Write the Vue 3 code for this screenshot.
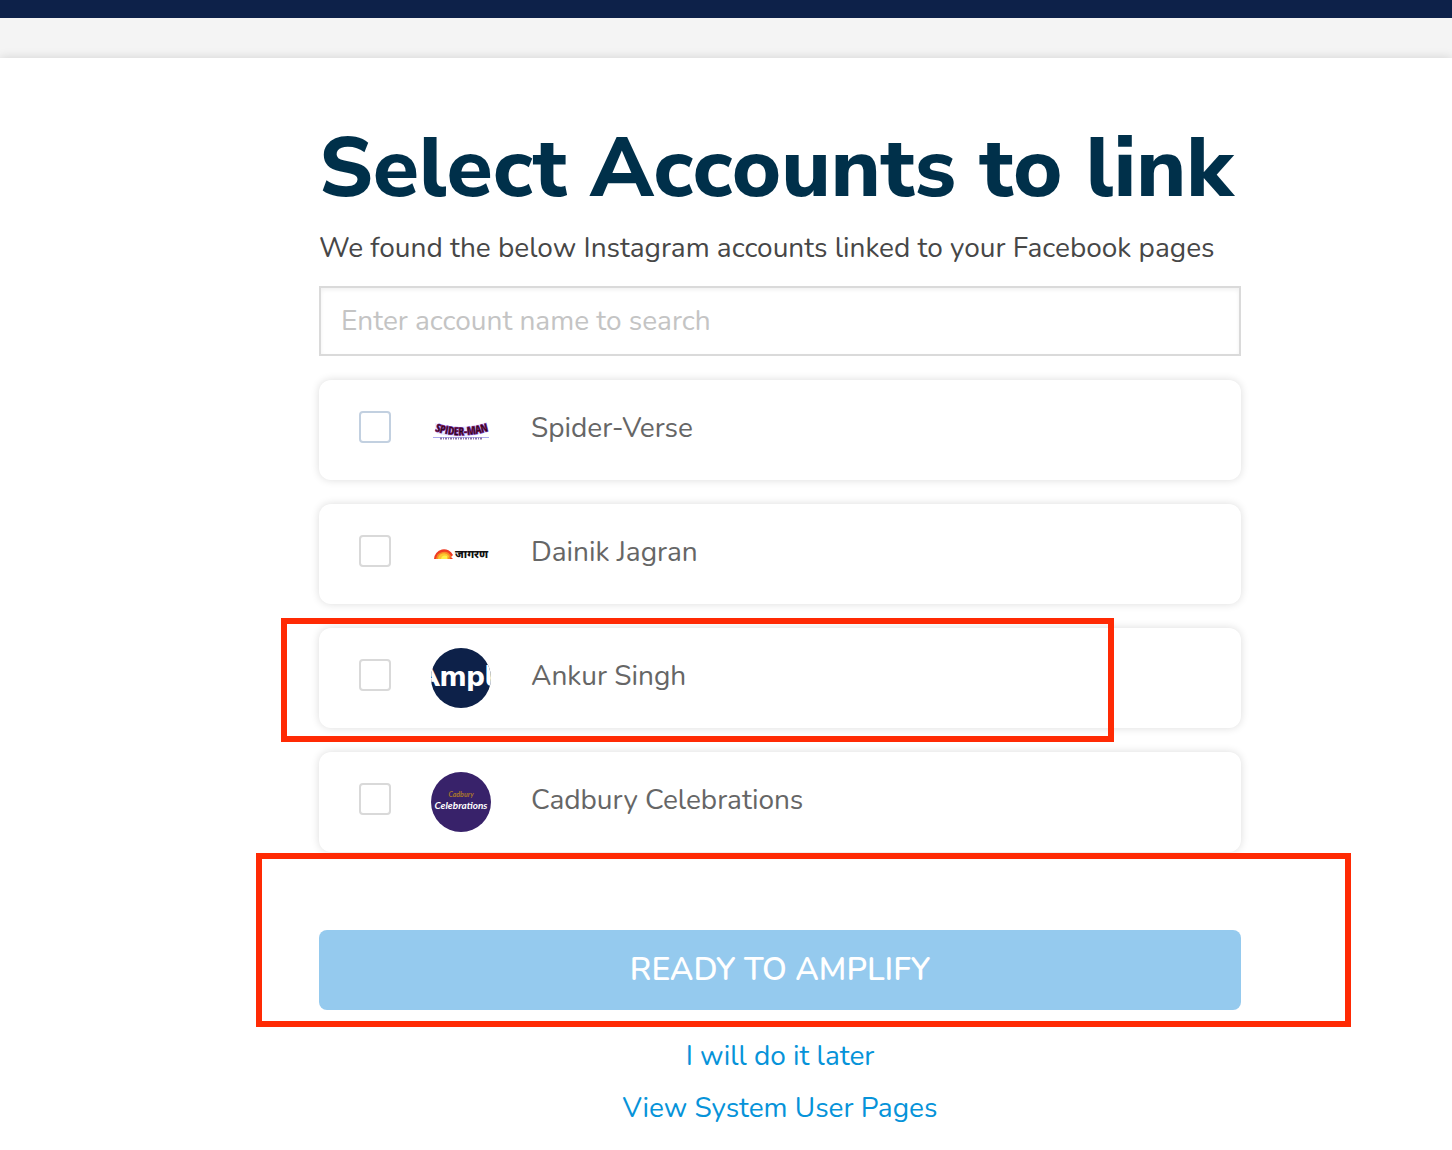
<script setup>
import { ref } from 'vue'

const search = ref('')
const selected = ref([])
const accounts = [
  { id: 'spider', name: 'Spider-Verse', focused: true },
  { id: 'jagran', name: 'Dainik Jagran' },
  { id: 'ampl', name: 'Ankur Singh', marked: true },
  { id: 'cadbury', name: 'Cadbury Celebrations' }
]
</script>

<template>
  <div class="page">
    <header class="topbar"></header>
    <main class="sheet">
      <form class="column" @submit.prevent>
        <h1>Select Accounts to link</h1>
        <p class="intro" id="intro">We found the below Instagram accounts linked to your Facebook pages</p>
        <input
          v-model="search"
          class="search"
          type="text"
          placeholder="Enter account name to search"
          aria-label="Enter account name to search"
        />
        <ul class="accounts" aria-labelledby="intro">
          <li v-for="account in accounts" :key="account.id" class="card">
            <label class="row">
              <input
                v-model="selected"
                type="checkbox"
                class="tick"
                :class="{ focused: account.focused }"
                :value="account.id"
              />
              <svg v-if="account.id === 'spider'" class="avatar" viewBox="0 0 60 60" aria-hidden="true">
                <path id="spider-arc" d="M4 31 Q30 40 61 30" fill="none" />
                <path d="M4 23 Q30 31 56 22 L57 32 Q30 41 5 33Z" fill="#8d86ea" opacity="0.2" />
                <text class="spider-glow"><textPath href="#spider-arc">SPIDER-MAN</textPath></text>
                <text class="spider-word"><textPath href="#spider-arc">SPIDER-MAN</textPath></text>
                <path d="M2 37.500H58" stroke="#aaa8ee" stroke-width="1" />
                <path d="M9 38.500H51" stroke="#8a74a8" stroke-width="2" stroke-dasharray="2 1 1 1" />
              </svg>
              <svg v-else-if="account.id === 'jagran'" class="avatar" viewBox="0 0 60 60" aria-hidden="true">
                <path d="M3 35A10 10 0 0 1 22 31L20 33L22 35Z" fill="#ef3b23" />
                <path d="M5 35A8 8 0 0 1 20 32L19 35Z" fill="#f78a25" />
                <path d="M7 35A6 6 0 0 1 18 32L17 35Z" fill="#fdc52f" />
                <path d="M10 35A4 4 0 0 1 16 32V35Z" fill="#fff04a" />
                <text class="jagran-word" x="24" y="34">जागरण</text>
              </svg>
              <svg v-else-if="account.id === 'ampl'" class="avatar round" viewBox="0 0 60 60" aria-hidden="true">
                <rect width="60" height="60" fill="#0d2149" />
                <text class="ampl-word" x="25" y="38">Ampl</text>
              </svg>
              <svg v-else class="avatar round" viewBox="0 0 60 60" aria-hidden="true">
                <rect width="60" height="60" fill="#38226a" />
                <text class="cadbury-small" x="30" y="25">Cadbury</text>
                <text class="cadbury-word" x="30" y="37">Celebrations</text>
              </svg>
              <span class="name">{{ account.name }}</span>
            </label>
            <span v-if="account.marked" class="marker marker-card"></span>
          </li>
        </ul>
        <div class="submit">
          <button type="submit">READY TO AMPLIFY</button>
          <span class="marker marker-submit"></span>
        </div>
        <nav class="links">
          <a href="#later">I will do it later</a>
          <a href="#pages">View System User Pages</a>
        </nav>
      </form>
    </main>
  </div>
</template>

<style>
body {
  background: #fff;
}
</style>

<style scoped>
.page {
  font-family: Nunito, "Open Sans", "Noto Sans", sans-serif;
  font-size: 28px;
  line-height: 40px;
  background: #f4f4f4;
}
.topbar {
  height: 18px;
  background: #0d2149;
}
.sheet {
  margin-top: 40px;
  padding: 62px 0 20px 108px;
  background: #fff;
  box-shadow: 0 0 10px rgba(0, 0, 0, 0.14);
}
.column {
  width: 100%;
  max-width: 922px;
  margin: 0 auto;
}
h1 {
  margin: 0;
  font-family: "Nunito Sans", "Noto Sans", sans-serif;
  font-size: 84px;
  font-weight: 800;
  line-height: 98px;
  white-space: nowrap;
  color: #00304a;
}
.intro {
  margin: 10px 0 18px;
  color: #474747;
  white-space: nowrap;
}
.search {
  display: block;
  box-sizing: border-box;
  width: 100%;
  height: 70px;
  padding: 0 20px;
  border: 2px solid #dadada;
  border-radius: 0;
  outline: none;
  background: #fff;
  box-shadow: inset 0 2px 4px rgba(0, 0, 0, 0.06);
  font: inherit;
  color: #474747;
}
.search::placeholder {
  color: #c4c4c4;
  opacity: 1;
}
.accounts {
  display: flex;
  flex-direction: column;
  gap: 24px;
  margin: 24px 0 78px;
  padding: 0;
  list-style: none;
}
.card {
  position: relative;
  border-radius: 12px;
  background: #fff;
  box-shadow: 0 0 8px rgba(0, 0, 0, 0.14);
}
.row {
  display: flex;
  align-items: center;
  gap: 40px;
  height: 100px;
  padding: 0 40px;
}
.tick {
  appearance: none;
  flex: none;
  box-sizing: border-box;
  width: 32px;
  height: 32px;
  margin: 0 0 6px;
  border: 2px solid #d9d9d9;
  border-radius: 4px;
  background: #fff;
}
.tick.focused {
  border-color: #c2d0e0;
}
.tick:checked {
  background: #95caee;
}
.avatar {
  flex: none;
  width: 60px;
  height: 60px;
}
.round {
  border-radius: 50%;
}
.name {
  margin-bottom: 4px;
  color: #666;
}
.spider-word,
.spider-glow {
  font: 700 11px "Liberation Sans Narrow", "Open Sans Condensed", "Roboto Condensed", "Liberation Sans", sans-serif;
  fill: #20081c;
  stroke: #b31538;
  stroke-width: 0.3px;
}
.spider-glow {
  stroke: #6a4ce0;
  stroke-width: 1px;
}
.jagran-word {
  font: 800 11px "Noto Sans", "Noto Sans Devanagari", sans-serif;
  fill: #111;
}
.ampl-word {
  font: 800 30px "Nunito Sans", Lato, sans-serif;
  fill: #fff;
  text-anchor: middle;
}
.cadbury-small,
.cadbury-word {
  font: italic 700 10px Lato, sans-serif;
  fill: #fff;
  text-anchor: middle;
}
.cadbury-small {
  font-size: 7px;
  fill: #a8772c;
}
.marker {
  position: absolute;
  border: 6px solid #ff2a04;
  pointer-events: none;
}
.marker-card {
  inset: -10px 127px -14px -38px;
}
.submit {
  position: relative;
}
.marker-submit {
  inset: -77px -110px -17px -63px;
}
button {
  display: block;
  width: 100%;
  height: 80px;
  padding: 0;
  border: 0;
  border-radius: 8px;
  background: #95caee;
  font: inherit;
  font-size: 32px;
  font-weight: 600;
  color: #fff;
}
.links {
  display: flex;
  flex-direction: column;
  align-items: center;
  gap: 12px;
  margin-top: 26px;
}
.links a {
  color: #0693d9;
  text-decoration: none;
}
</style>
